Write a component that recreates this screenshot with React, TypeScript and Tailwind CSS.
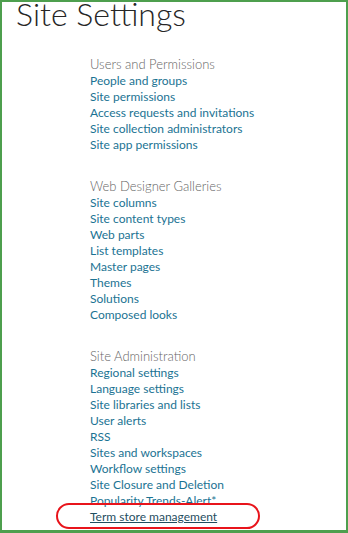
const sections = [
  {
    title: "Users and Permissions",
    links: [
      "People and groups",
      "Site permissions",
      "Access requests and invitations",
      "Site collection administrators",
      "Site app permissions",
    ],
  },
  {
    title: "Web Designer Galleries",
    links: [
      "Site columns",
      "Site content types",
      "Web parts",
      "List templates",
      "Master pages",
      "Themes",
      "Solutions",
      "Composed looks",
    ],
  },
  {
    title: "Site Administration",
    links: [
      "Regional settings",
      "Language settings",
      "Site libraries and lists",
      "User alerts",
      "RSS",
      "Sites and workspaces",
      "Workflow settings",
      "Site Closure and Deletion",
      "Popularity Trends-Alert*",
    ],
  },
];

export default function App() {
  return (
    <div
      className="relative w-[348px] h-[533px] overflow-hidden bg-white border-l-2 border-t-2 border-r-2 border-b-[3px] border-[#4e9f4e]"
      style={{ fontFamily: 'Lato, "Open Sans", sans-serif' }}
    >
      <h1 className="pl-[14px] -mt-[7px] text-[32px] leading-[38px] font-light text-[#262626]">
        Site Settings
      </h1>

      <div className="pl-[88px] pt-[23px] flex flex-col gap-[25px]">
        {sections.map((section, i) => (
          <div key={section.title} className="flex flex-col">
            <h2 className="text-[13px] leading-[17px] font-light text-[#666666]">
              {section.title}
            </h2>
            <ul className="flex flex-col">
              {section.links.map((link) => (
                <li key={link} className="text-[12px] leading-[16px] text-[#1b7393]">
                  <a href="#">{link}</a>
                </li>
              ))}
              {i === sections.length - 1 && (
                <li className="relative text-[12px] leading-[16px] text-[#1f4e5f]">
                  <a href="#" className="underline">
                    Term store management
                  </a>
                  <span className="absolute -left-[34px] -top-[6px] w-[204px] h-[26px] rounded-[13px] border-2 border-[#e8141b]" />
                </li>
              )}
            </ul>
          </div>
        ))}
      </div>
    </div>
  );
}
